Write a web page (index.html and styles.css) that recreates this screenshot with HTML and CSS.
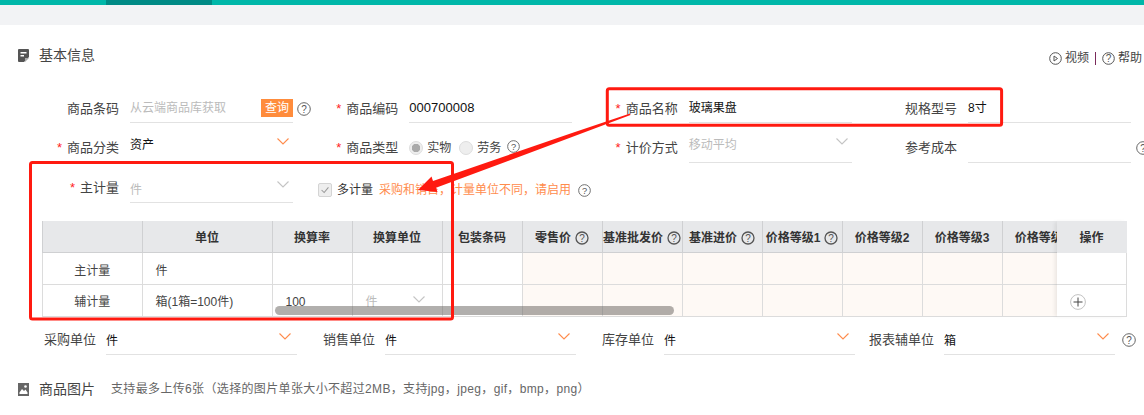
FILE: index.html
```html
<!DOCTYPE html>
<html lang="zh">
<head>
<meta charset="utf-8">
<title>基本信息</title>
<link rel="stylesheet" href="styles.css">
</head>
<body>
<div class="topbar"><div class="topbar-tab"></div></div>
<div class="greyband"></div>

<header class="sec-head">
  <div class="sec-title">
    <svg class="sec-icon" viewBox="0 0 11 13"><path fill="#555" d="M1 0h9a1 1 0 0 1 1 1v7l-5 5H1a1 1 0 0 1-1-1V1a1 1 0 0 1 1-1z"/><path fill="#fff" d="M2.500 3h6v1.500h-6zM2.500 6h3.500v1.500h-3.500z"/><path fill="#aaa" d="M7 9h4l-4 4z"/></svg>
    <span>基本信息</span>
  </div>
  <div class="links">
    <svg class="link-icon" viewBox="0 0 13 13"><circle cx="6.500" cy="6.500" r="5.800" fill="none" stroke="#555"/><path fill="none" stroke="#555" d="M5 4l3.500 2.500L5 9z"/></svg>
    <span>视频</span>
    <i class="sep"></i>
    <svg class="link-icon" viewBox="0 0 13 13"><circle cx="6.500" cy="6.500" r="5.800" fill="none" stroke="#555"/><text x="6.500" y="9.700" class="q">?</text></svg>
    <span>帮助</span>
  </div>
</header>

<section class="form-row r1">
  <div class="field"><label class="lbl">商品条码</label>
    <div class="inp"><span class="val ph">从云端商品库获取</span><button class="query">查询</button></div>
    <svg class="help help-out" viewBox="0 0 14 14"><circle cx="7" cy="7" r="6.300" fill="none" stroke="#666"/><text x="7" y="10.500" class="q">?</text></svg>
  </div>
  <div class="field"><label class="lbl"><b>*</b>商品编码</label><div class="inp"><span class="val num">000700008</span></div></div>
  <div class="field"><label class="lbl"><b>*</b>商品名称</label><div class="inp"><span class="val">玻璃果盘</span></div></div>
  <div class="field"><label class="lbl">规格型号</label><div class="inp"><span class="val">8寸</span></div></div>
</section>

<section class="form-row r2">
  <div class="field"><label class="lbl"><b>*</b>商品分类</label>
    <div class="inp"><span class="val up">资产</span><svg class="chev" viewBox="0 0 12 7"><path d="M.5.500l5.500 5.500L11.500.500"/></svg></div></div>
  <div class="field"><label class="lbl"><b>*</b>商品类型</label>
    <div class="radios">
      <i class="radio on"></i><span>实物</span><i class="radio"></i><span>劳务</span>
      <svg class="help small" viewBox="0 0 14 14"><circle cx="7" cy="7" r="6.300" fill="none" stroke="#666"/><text x="7" y="10.500" class="q">?</text></svg>
    </div></div>
  <div class="field"><label class="lbl"><b>*</b>计价方式</label>
    <div class="inp"><span class="val up ph">移动平均</span><svg class="chev grey" viewBox="0 0 12 7"><path d="M.5.500l5.500 5.500L11.500.500"/></svg></div></div>
  <div class="field"><label class="lbl">参考成本</label><div class="inp"></div>
    <svg class="help help-far" viewBox="0 0 14 14"><circle cx="7" cy="7" r="6.300" fill="none" stroke="#666"/><text x="7" y="10.500" class="q">?</text></svg></div>
</section>

<section class="form-row r3">
  <div class="field"><label class="lbl"><b>*</b>主计量</label>
    <div class="inp"><span class="val down ph">件</span><svg class="chev grey low" viewBox="0 0 12 7"><path d="M.5.500l5.500 5.500L11.500.500"/></svg></div></div>
  <div class="multi">
    <i class="check"><svg viewBox="0 0 14 14"><path d="M3 7l3 3 5-6" fill="none" stroke="#999" stroke-width="1.200"/></svg></i>
    <span class="multi-lbl">多计量</span>
    <span class="multi-tip">采购和销售，计量单位不同，请启用</span>
    <svg class="help tip-help" viewBox="0 0 14 14"><circle cx="7" cy="7" r="6.300" fill="none" stroke="#666"/><text x="7" y="10.500" class="q">?</text></svg>
  </div>
</section>

<section class="tbl">
  <div class="tbl-scroll">
    <div class="trow thead">
      <div class="c c0"></div><div class="c c1">单位</div><div class="c c2">换算率</div><div class="c c3">换算单位</div><div class="c c4">包装条码</div>
      <div class="c cp">零售价<svg class="help th" viewBox="0 0 14 14"><circle cx="7" cy="7" r="6" fill="none" stroke="#555" stroke-width="1.300"/><text x="7" y="10.500" class="q">?</text></svg></div>
      <div class="c cp">基准批发价<svg class="help th" viewBox="0 0 14 14"><circle cx="7" cy="7" r="6" fill="none" stroke="#555" stroke-width="1.300"/><text x="7" y="10.500" class="q">?</text></svg></div>
      <div class="c cp">基准进价<svg class="help th" viewBox="0 0 14 14"><circle cx="7" cy="7" r="6" fill="none" stroke="#555" stroke-width="1.300"/><text x="7" y="10.500" class="q">?</text></svg></div>
      <div class="c cp">价格等级1<svg class="help th" viewBox="0 0 14 14"><circle cx="7" cy="7" r="6" fill="none" stroke="#555" stroke-width="1.300"/><text x="7" y="10.500" class="q">?</text></svg></div>
      <div class="c cp">价格等级2</div><div class="c cp">价格等级3</div><div class="c cp">价格等级4</div>
    </div>
    <div class="trow">
      <div class="c c0">主计量</div><div class="c c1 left">件</div><div class="c c2"></div><div class="c c3"></div><div class="c c4"></div>
      <div class="c cp price"></div><div class="c cp price"></div><div class="c cp price"></div><div class="c cp price"></div><div class="c cp price"></div><div class="c cp price"></div><div class="c cp price"></div>
    </div>
    <div class="trow">
      <div class="c c0">辅计量</div><div class="c c1 left">箱(1箱=100件)</div><div class="c c2 left">100</div>
      <div class="c c3 left unit"><span class="ph">件</span><svg class="chev grey" viewBox="0 0 12 7"><path d="M.5.500l5.500 5.500L11.500.500"/></svg></div>
      <div class="c c4"></div>
      <div class="c cp price"></div><div class="c cp price"></div><div class="c cp price"></div><div class="c cp price"></div><div class="c cp price"></div><div class="c cp price"></div><div class="c cp price"></div>
    </div>
    <div class="scrollbar"></div>
  </div>
  <div class="tbl-op">
    <div class="op ophead">操作</div>
    <div class="op"></div>
    <div class="op opadd"><svg class="plus" viewBox="0 0 16 16"><circle cx="8" cy="8" r="7.400" fill="#fff" stroke="#bbb" stroke-width=".9"/><path d="M8 3.500v9M3.500 8h9" stroke="#444" stroke-width="1"/></svg></div>
  </div>
</section>

<section class="units">
  <div class="field"><label class="lbl">采购单位</label><div class="inp"><span class="val">件</span><svg class="chev low" viewBox="0 0 12 7"><path d="M.5.500l5.500 5.500L11.500.500"/></svg></div></div>
  <div class="field"><label class="lbl">销售单位</label><div class="inp"><span class="val">件</span><svg class="chev low" viewBox="0 0 12 7"><path d="M.5.500l5.500 5.500L11.500.500"/></svg></div></div>
  <div class="field"><label class="lbl">库存单位</label><div class="inp"><span class="val">件</span><svg class="chev low" viewBox="0 0 12 7"><path d="M.5.500l5.500 5.500L11.500.500"/></svg></div></div>
  <div class="field last"><label class="lbl">报表辅单位</label><div class="inp"><span class="val">箱</span><svg class="chev low" viewBox="0 0 12 7"><path d="M.5.500l5.500 5.500L11.500.500"/></svg></div>
    <svg class="help unit-help" viewBox="0 0 14 14"><circle cx="7" cy="7" r="6.300" fill="none" stroke="#666"/><text x="7" y="10.500" class="q">?</text></svg></div>
</section>

<section class="sec-pics">
  <svg class="sec-icon" viewBox="0 0 11 13"><path fill="#666" d="M0 0h11v13H0z"/><path fill="#fff" d="M1.500 9.500L4 6l2 2 1.500-1.500 2 3v1.500h-8z"/><circle cx="7.500" cy="3.500" r="1.300" fill="#fff"/></svg>
  <span class="sec-name">商品图片</span>
  <span class="sec-desc">支持最多上传6张（选择的图片单张大小不超过2MB，支持jpg，jpeg，gif，bmp，png）</span>
</section>

<svg class="marks" viewBox="0 0 1144 415">
  <rect x="30.500" y="162.500" width="422" height="156.500" rx="2"/>
  <rect x="607.300" y="88.800" width="394.300" height="36.500" rx="2"/>
  <polygon class="arrow" points="630,113.500 572,133 433,181 431.500,176.500 418,190 437.500,192 436,187.800 572,137 630.500,115"/>
</svg>
</body>
</html>
```

FILE: styles.css
```css
* { box-sizing: border-box; }
html, body { margin: 0; padding: 0; height: 100%; overflow: hidden; }
body {
  position: relative;
  background: #fff;
  color: #333;
  font: 13px/1.2 "Liberation Sans", "Noto Sans CJK SC", sans-serif;
}
i { display: block; font-style: normal; }

.topbar { height: 5px; background: #00b7a9; }
.topbar-tab { width: 106px; height: 5px; margin-left: 106px; background: #008a85; }
.greyband { height: 20px; background: #f2f3f5; }

.sec-head { display: flex; justify-content: space-between; height: 64px; padding: 20px 2px 0 18px; }
.sec-title { display: flex; align-items: center; gap: 10px; height: 20px; font-size: 14px; color: #444; }
.sec-icon { width: 11px; height: 13px; flex: none; }
.links { display: flex; align-items: center; height: 20px; margin-top: 3px; font-size: 12px; color: #444; }
.link-icon { width: 13px; height: 13px; margin-right: 3px; }
.sep { width: 1px; height: 13px; margin: 0 6px; background: #7a2a5a; }
.q { font: 10px "Liberation Sans", sans-serif; fill: #555; text-anchor: middle; }

.form-row { display: flex; height: 40px; padding-left: 14px; }
.form-row .field { width: 279.330px; }
.field { position: relative; display: flex; align-items: flex-start; flex: none; }
.form-row .lbl { width: 105px; margin-right: 11px; }
.lbl { flex: none; height: 38px; line-height: 38px; text-align: right; white-space: nowrap; color: #444; }
.r1 .lbl { line-height: 40px; }
.lbl b { margin-right: 5px; font-weight: 400; color: #f22; }
.inp { display: flex; justify-content: space-between; align-items: flex-start; flex: none; width: 163px; height: 34px; border-bottom: 1px solid #e2e2e2; }
.val { padding-top: 4px; font-size: 12px; line-height: 30px; color: #111; white-space: nowrap; }
.val.num { font-size: 13px; }
.val.up { padding-top: 1px; }
.val.down { padding-top: 6px; }
.ph, .val.ph { color: #bbb; }
.query { align-self: flex-start; width: 32px; height: 18px; margin-top: 10px; padding: 0; border: 0; background: #ff8c3c; color: #fff; font: 12px/18px "Liberation Sans", "Noto Sans CJK SC", sans-serif; }
.chev { width: 12px; height: 7px; margin: 9px 4px 0 0; flex: none; fill: none; stroke: #ff8c4c; stroke-width: 1.100; }
.chev.grey { stroke: #c4c4c4; }
.chev.low { margin-top: 12px; }
.units .chev { margin-right: 6px; }
.help { display: block; flex: none; width: 14px; height: 14px; }
.help-out { margin: 13px -18px 0 4px; }
.help-far { margin: 12px -19px 0 5px; }
.radios { display: flex; align-items: center; height: 38px; font-size: 12px; color: #444; }
.radios span { margin-right: 8px; }
.radio { width: 14px; height: 14px; margin-right: 4px; border: 1px solid #ddd; border-radius: 50%; background: #eee; }
.radio.on { background: radial-gradient(circle, #aaa 0 4px, #eee 4.500px); }
.help.small { width: 13px; height: 13px; margin: -4px 0 0 -2px; }

.r3 .field { width: 304px; }
.multi { display: flex; align-items: center; height: 38px; margin-top: 2px; }
.check { width: 14px; height: 14px; margin-right: 5px; border: 1px solid #d4d4d4; border-radius: 2px; background: #eee; }
.check svg { display: block; width: 12px; height: 12px; }
.multi-lbl { margin-right: 6px; font-size: 12px; color: #333; }
.multi-tip { margin-right: 7px; font-size: 12px; color: #ff8c4c; }
.help.tip-help { width: 13px; height: 13px; }

.tbl { display: flex; width: 1085px; height: 96px; margin: 12px 0 0 42px; }
.tbl-scroll { position: relative; flex: none; width: 1015px; overflow: hidden; }
.trow { display: flex; width: 1200px; height: 32px; }
.trow:nth-child(2) { height: 31.500px; }
.thead { background: #e7e8ea; font-weight: 700; }
.c { display: flex; align-items: center; justify-content: center; flex: none; height: 100%; padding-top: 5px; border-right: 1px solid #dcdcdc; border-bottom: 1px solid #dcdcdc; font-size: 12px; color: #444; white-space: nowrap; }
.thead .c { padding-top: 3px; border-color: #cfd0d2; color: #333; }
.c0 { width: 100.500px; border-left: 1px solid #dcdcdc; }
.c1 { width: 130px; }
.c2 { width: 80px; }
.c3 { width: 90px; }
.c4 { width: 80px; }
.cp { width: 80px; }
.price { background: #fef9f5; }
.left { justify-content: flex-start; padding-left: 13px; }
.unit { justify-content: space-between; }
.unit .chev { margin: -6px 17px 0 0; }
.help.th { width: 14px; height: 14px; margin-left: 4px; }
.scrollbar { position: absolute; left: 233px; top: 85px; width: 399px; height: 9px; border-radius: 4.500px; background: rgba(100, 96, 92, .5); }

.tbl-op { position: relative; flex: none; width: 70px; box-shadow: -3px 0 4px -1px rgba(0, 0, 0, .08); }
.op { display: flex; align-items: center; height: 31.500px; border-right: 1px solid #dcdcdc; border-bottom: 1px solid #dcdcdc; background: #fff; }
.ophead { justify-content: center; height: 32px; padding-top: 3px; border-color: #e7e8ea; background: #e7e8ea; font-size: 12px; font-weight: 700; color: #333; }
.opadd { height: 32px; padding: 4px 0 0 13px; }
.plus { width: 16px; height: 16px; display: block; }

.units { display: grid; grid-template-columns: 279px 279px 267px auto; height: 40px; margin-top: 4px; padding-left: 44px; }
.units .lbl { width: 52px; margin-right: 10px; }
.units .last .lbl { width: 65px; margin-right: 10px; }
.units .inp { width: 191px; }
.units .last .inp { width: 171px; }
.units .val { padding-top: 5px; }
.help.unit-help { margin: 12px 0 0 7px; }

.sec-pics { display: flex; align-items: center; height: 20px; margin-top: 18px; padding-left: 18px; }
.sec-name { margin-left: 10px; font-size: 14px; color: #444; }
.sec-desc { margin-left: 16px; font-size: 12px; letter-spacing: .35px; color: #666; white-space: nowrap; }

.marks { position: absolute; left: 0; top: 0; width: 1144px; height: 415px; pointer-events: none; }
.marks rect { fill: none; stroke: #ff1a10; stroke-width: 3; }
.marks .arrow { fill: #ff1a10; }
```
